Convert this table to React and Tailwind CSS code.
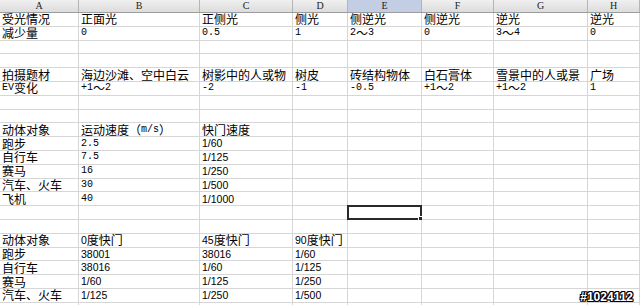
import React from 'react';

const COLS = ['A', 'B', 'C', 'D', 'E', 'F', 'G', 'H'];

// s = SimSun-looking latin (monospace), a = Arial-looking latin
const ROWS = [
  [['受光情况', '正面光', '正侧光', '侧光', '侧逆光', '侧逆光', '逆光', '逆光'], 's'],
  [['减少量', '0', '0.5', '1', '2～3', '0', '3～4', '0'], 's'],
  [[], 's'],
  [[], 's'],
  [['拍摄题材', '海边沙滩、空中白云', '树影中的人或物', '树皮', '砖结构物体', '白石膏体', '雪景中的人或景', '广场'], 's'],
  [['EV变化', '+1～2', '-2', '-1', '-0.5', '+1～2', '+1～2', '1'], 's'],
  [[], 's'],
  [[], 's'],
  [['动体对象', '运动速度（m/s）', '快门速度'], 's'],
  [['跑步', '2.5', '1/60'], 's', 2],
  [['自行车', '7.5', '1/125'], 's', 2],
  [['赛马', '16', '1/250'], 's', 2],
  [['汽车、火车', '30', '1/500'], 's', 2],
  [['飞机', '40', '1/1000'], 's', 2],
  [[], 's'],
  [[], 's'],
  [['动体对象', '0度快门', '45度快门', '90度快门'], 'a', 1],
  [['跑步', '38001', '38016', '1/60'], 'a', 1],
  [['自行车', '38016', '1/60', '1/125'], 'a', 1],
  [['赛马', '1/60', '1/125', '1/250'], 'a', 1],
  [['汽车、火车', '1/125', '1/250', '1/500'], 'a', 1],
  [[], 's'],
];

function Text({ value, kind }) {
  const parts = value.split(/([\x00-\x7f]+)/).filter(Boolean);
  return parts.map((p, i) =>
    /^[\x00-\x7f]+$/.test(p) ? (
      <span
        key={i}
        className={
          kind === 's'
            ? "font-['Liberation_Mono',monospace] text-[10px]"
            : "font-['Liberation_Sans',sans-serif] text-[10.5px]"
        }
      >
        {p}
      </span>
    ) : (
      <span key={i}>{p}</span>
    )
  );
}

export default function App() {
  return (
    <div className="relative w-[640px] h-[305px] overflow-hidden bg-white text-black font-['Noto_Sans_CJK_SC',sans-serif]">
      {/* column headers */}
      <div className="grid grid-cols-[79px_121px_93px_55px_74px_72px_94px_1fr] h-[13px] border-b border-[#9c9c9c]">
        {COLS.map((c) => (
          <div
            key={c}
            className={`flex items-center justify-center border-r border-[#b4b4b4] font-['Liberation_Serif',serif] text-[10px] leading-none text-[#222] ${
              c === 'E' ? 'bg-[#c3cde4]' : 'bg-gradient-to-b from-[#f0f0f0] to-[#dcdcdc]'
            }`}
          >
            {c}
          </div>
        ))}
      </div>

      {/* sheet body */}
      <div className="grid grid-cols-[79px_121px_93px_55px_74px_72px_94px_1fr] auto-rows-[13.8px]">
        {ROWS.map(([cells, kind, armCol], r) =>
          COLS.map((c, ci) => {
            const v = cells[ci];
            const k = armCol !== undefined && ci >= armCol ? 'a' : kind;
            const selected = r === 14 && c === 'E';
            return (
              <div
                key={`${r}-${c}`}
                className="relative flex items-center pl-[2px] border-r border-b border-[#d6d6d6] text-[12px] leading-none whitespace-nowrap"
              >
                {v && <Text value={v} kind={ci === 0 ? 's' : k} />}
                {selected && (
                  <div className="absolute -left-[1px] -top-[1px] -right-[1px] -bottom-[1px] border-2 border-[#2a2a2a]">
                    <div className="absolute -right-[3px] -bottom-[3px] w-[5px] h-[5px] bg-[#2a2a2a] border border-white" />
                  </div>
                )}
              </div>
            );
          })
        )}
      </div>

      {/* watermark */}
      <div className="absolute right-[7px] bottom-[2px] font-['Liberation_Sans',sans-serif] font-bold text-[12px] leading-none text-white [text-shadow:1px_0_0_#000,-1px_0_0_#000,0_1px_0_#000,0_-1px_0_#000,1px_1px_0_#000,-1px_-1px_0_#000,1px_-1px_0_#000,-1px_1px_0_#000]">
        #1024112
      </div>
    </div>
  );
}
